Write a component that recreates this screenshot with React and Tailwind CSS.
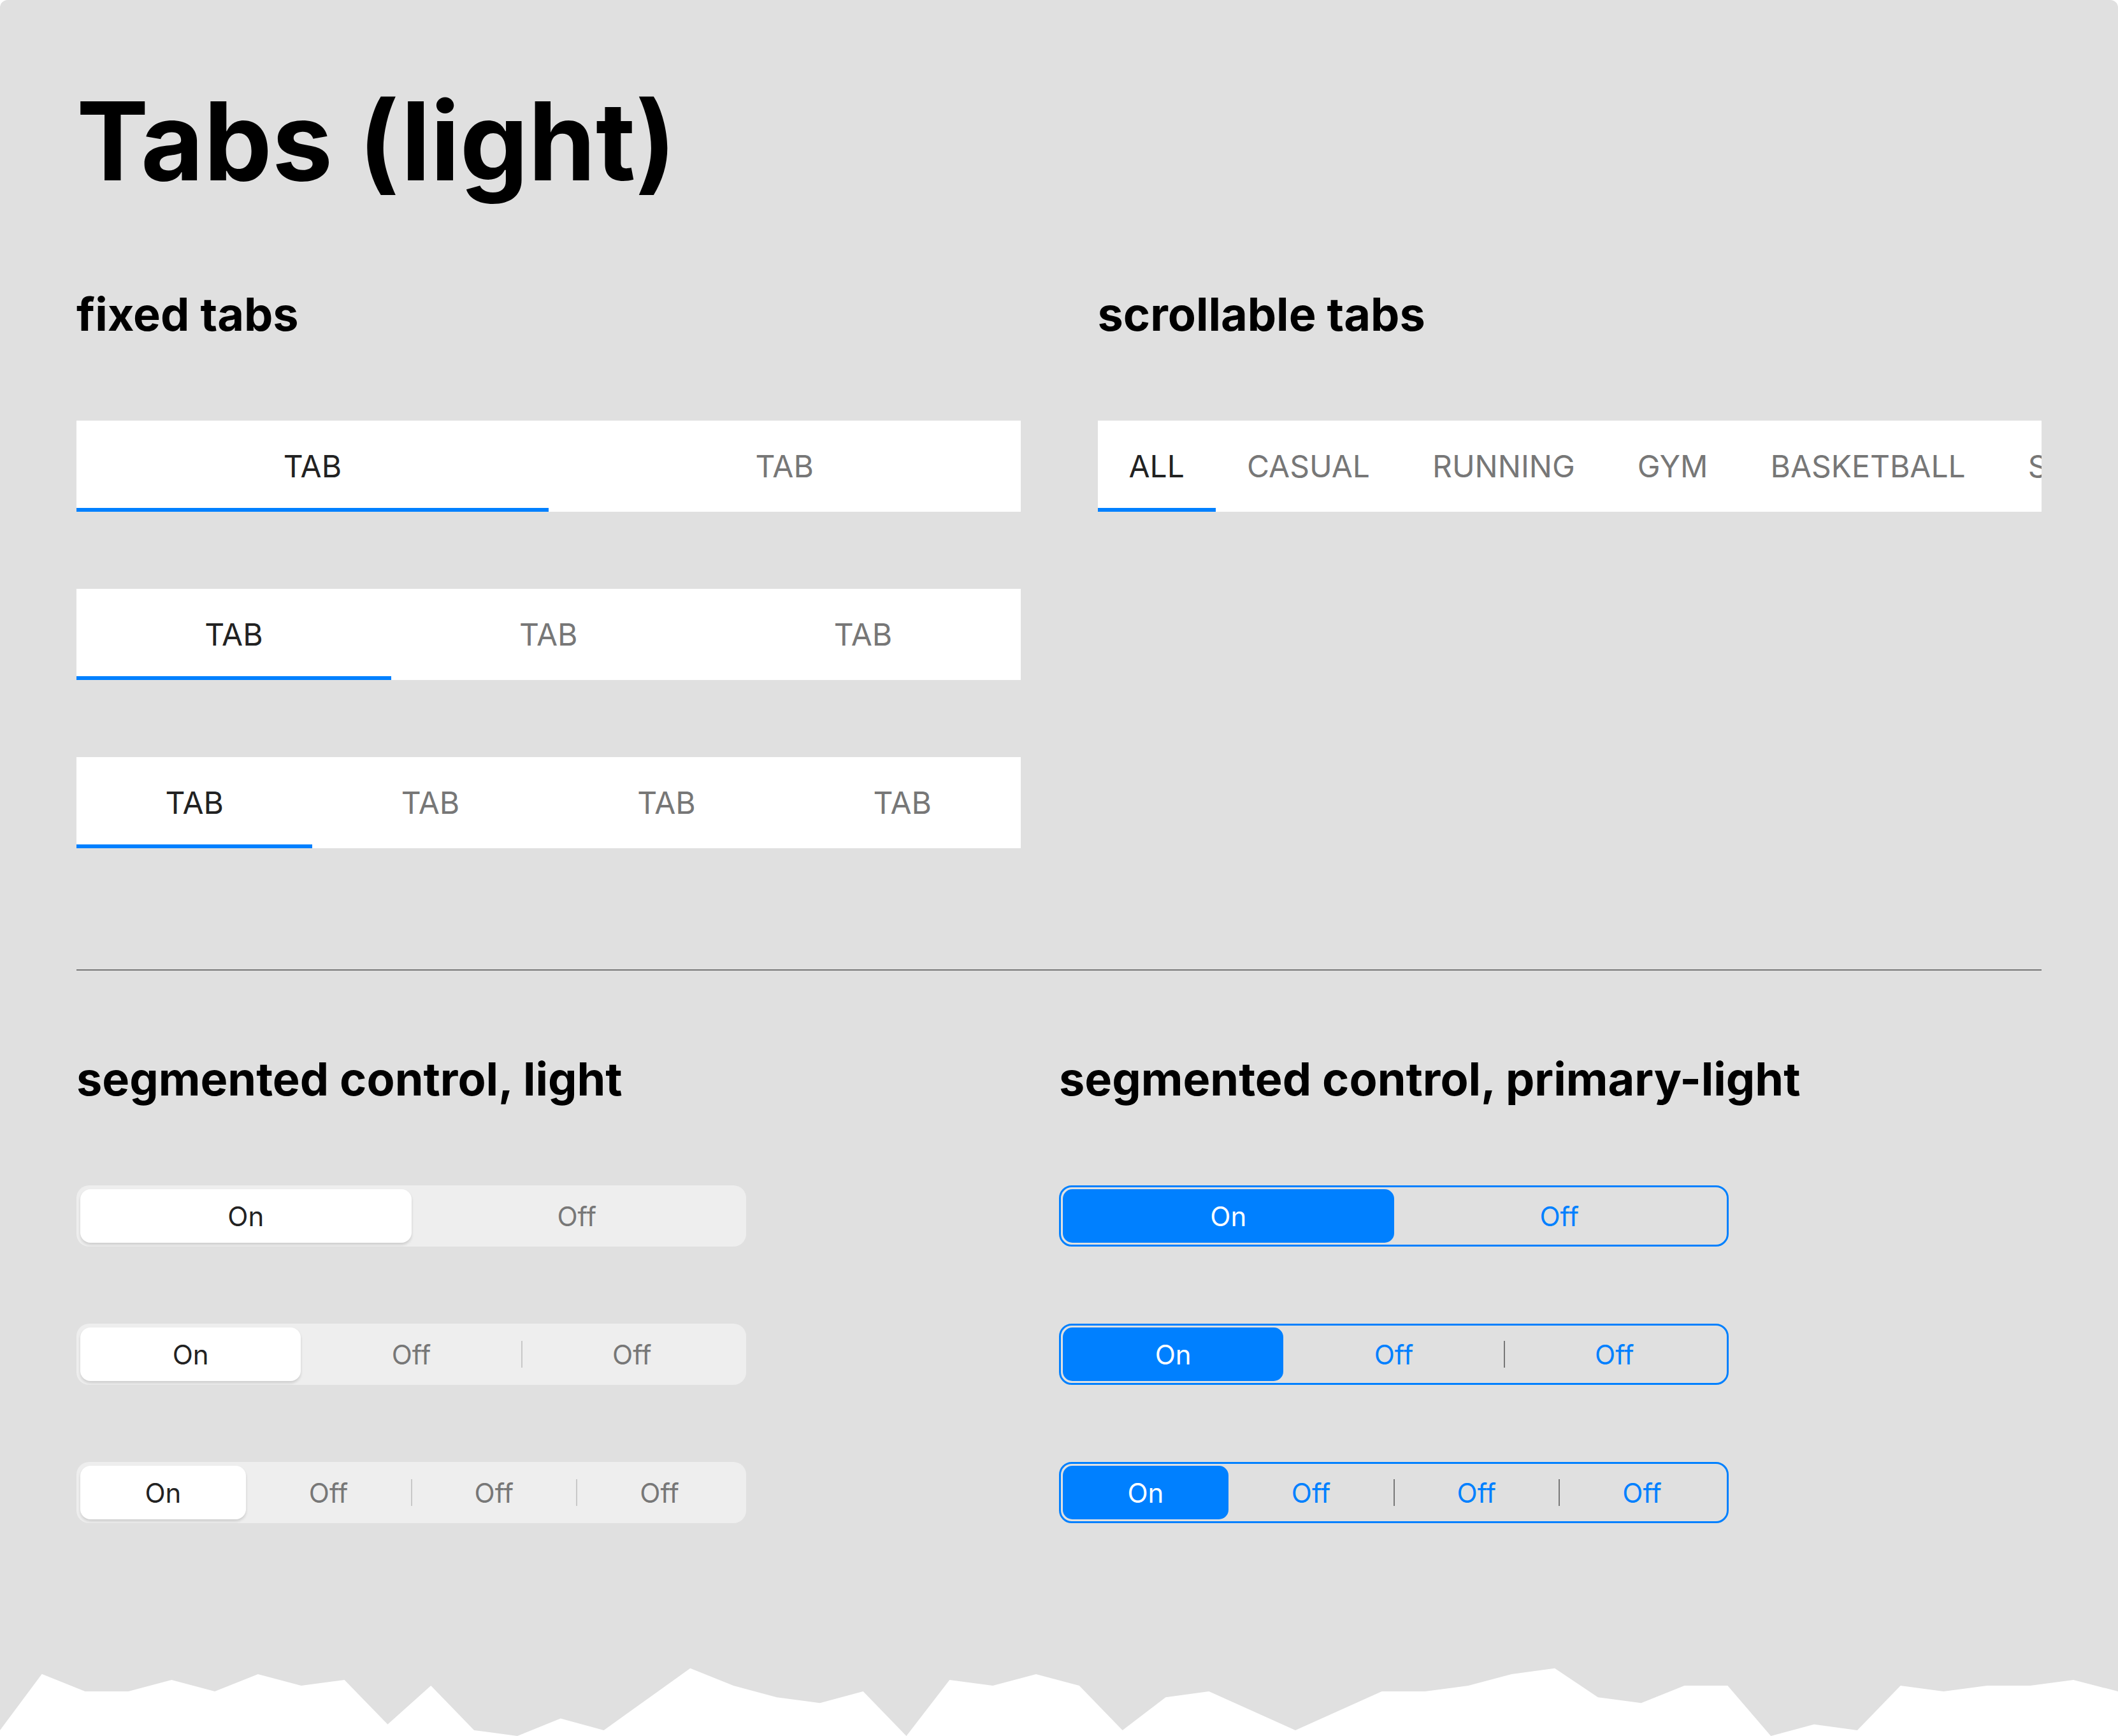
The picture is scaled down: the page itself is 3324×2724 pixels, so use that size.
import React from "react";

const fixedRows = [2, 3, 4];
const scrollTabs = ["ALL", "CASUAL", "RUNNING", "GYM", "BASKETBALL", "SNEAKERS"];
const segRows = [2, 3, 4];

const tornPoints =
  "0,545 31,235 63,331 95,331 127,267 159,331 191,236 223,299 255,267 287,513 319,299 351,545 383,577 415,480 447,545 511,203 543,299 575,363 607,395 639,331 671,577 703,267 735,299 767,236 799,299 831,545 863,363 895,331 959,545 1023,331 1055,331 1087,299 1119,236 1151,203 1183,363 1215,395 1247,299 1279,299 1311,577 1343,513 1375,545 1407,299 1439,331 1471,299 1503,299 1535,267 1568,331 1568,577 0,577";

function FixedTabs({ count }) {
  return (
    <div className="flex h-[143px] bg-white">
      {Array.from({ length: count }).map((_, i) => (
        <div
          key={i}
          className={`flex flex-1 items-center justify-center border-b-[6px] pt-[6px] text-[48px] ${
            i === 0 ? "border-[#0080ff] text-[#222222]" : "border-transparent text-[#777777]"
          }`}
        >
          TAB
        </div>
      ))}
    </div>
  );
}

function ScrollTabs() {
  return (
    <div className="flex h-[143px] overflow-hidden bg-white">
      {scrollTabs.map((label, i) => (
        <div
          key={label}
          className={`flex shrink-0 items-center border-b-[6px] px-[49px] pt-[6px] text-[48px] ${
            i === 0 ? "border-[#0080ff] text-[#222222]" : "border-transparent text-[#777777]"
          }`}
        >
          {label}
        </div>
      ))}
    </div>
  );
}

function Segmented({ count, primary }) {
  const items = Array.from({ length: count });
  return (
    <div
      className={`flex h-[96px] w-[1051px] rounded-[20px] ${
        primary ? "border-[3px] border-[#0080ff] p-[3px]" : "bg-[#eeeeee] p-[6px]"
      }`}
    >
      {items.map((_, i) => (
        <React.Fragment key={i}>
          {i > 1 ? (
            <div className="flex w-0 items-center justify-center">
              <div className={`h-[42px] w-[2px] shrink-0 ${primary ? "bg-[#777777]" : "bg-[#c8c8c8]"}`} />
            </div>
          ) : null}
          <div
            className={`flex flex-1 items-center justify-center text-[42px] ${
              i === 0
                ? primary
                  ? "rounded-[15px] bg-[#0080ff] text-white"
                  : "rounded-[16px] bg-white text-[#222222] shadow-[0_3px_4px_rgba(0,0,0,0.14)]"
                : primary
                ? "text-[#0080ff]"
                : "text-[#777777]"
            }`}
          >
            {i === 0 ? "On" : "Off"}
          </div>
        </React.Fragment>
      ))}
    </div>
  );
}

export default function App() {
  return (
    <div className="bg-white font-['Inter',sans-serif]">
      <div className="flex h-[2724px] flex-col rounded-t-[12px] bg-[#e0e0e0]">
        <div className="px-[120px] pt-[136px]">
          <h1 className="text-[170px] font-bold leading-[170px] text-black">Tabs (light)</h1>

          <div className="mt-[151px] grid grid-cols-2 gap-x-[121px]">
            <div>
              <h2 className="text-[72px] font-bold leading-[72px] text-black">fixed tabs</h2>
              <div className="mt-[131px] flex flex-col gap-[121px]">
                {fixedRows.map((n) => (
                  <FixedTabs key={n} count={n} />
                ))}
              </div>
            </div>
            <div>
              <h2 className="text-[72px] font-bold leading-[72px] text-black">scrollable tabs</h2>
              <div className="mt-[131px]">
                <ScrollTabs />
              </div>
            </div>
          </div>

          <div className="mt-[190px] h-[2px] bg-[#777777]" />

          <div className="mt-[134px] grid grid-cols-2">
            <div>
              <h2 className="text-[72px] font-bold leading-[72px] text-black">segmented control, light</h2>
              <div className="mt-[131px] flex flex-col gap-[121px]">
                {segRows.map((n) => (
                  <Segmented key={n} count={n} />
                ))}
              </div>
            </div>
            <div>
              <h2 className="text-[72px] font-bold leading-[72px] text-black">segmented control, primary-light</h2>
              <div className="mt-[131px] flex flex-col gap-[121px]">
                {segRows.map((n) => (
                  <Segmented key={n} count={n} primary />
                ))}
              </div>
            </div>
          </div>
        </div>

        <svg className="mt-auto block h-[164px] w-full" viewBox="0 0 1568 577" preserveAspectRatio="none">
          <polygon points={tornPoints} fill="#ffffff" />
        </svg>
      </div>
    </div>
  );
}
